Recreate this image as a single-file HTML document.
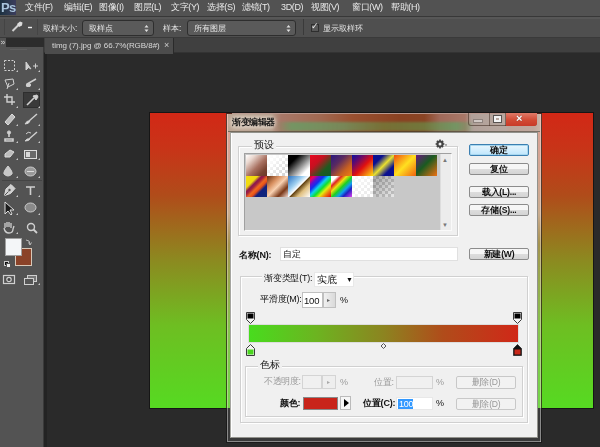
<!DOCTYPE html>
<html><head><meta charset="utf-8">
<style>
*{margin:0;padding:0;box-sizing:border-box}
html,body{width:600px;height:447px;overflow:hidden;background:#2a2a2a}
body{position:relative;font-family:"Liberation Sans",sans-serif;font-size:9px;color:#ddd}
.a{position:absolute}
.t{position:absolute;white-space:nowrap;line-height:1}
/* menubar */
#menu{left:0;top:0;width:600px;height:16px;background:#525252}
#menu .t{top:3px;color:#e8e8e8;font-size:9px;font-weight:500;letter-spacing:-0.35px}
#opt{left:0;top:17px;width:600px;height:20px;background:#4f4f4f}
.dd{position:absolute;height:16px;border:1px solid #2e2e2e;border-radius:3px;background:#5a5a5a}
#tabstrip{left:44px;top:38px;width:556px;height:15px;background:#404040;border-bottom:1px solid #333}
#tab{left:45px;top:38px;width:129px;height:16px;background:#4c4c4c;border-right:1px solid #2a2a2a}
#tools{left:0;top:38px;width:44px;height:409px;background:#535353}
#canvas{left:150px;top:113px;width:443px;height:295px;background:linear-gradient(180deg,#d22816 0%,#c83418 12%,#b04c1a 28%,#8c8a20 50%,#6ebe22 72%,#56da22 100%);box-shadow:0 0 0 1px #161616}
/* dialog */
#dlg{left:227px;top:113px;width:314px;height:330px}
#title{left:0;top:0;width:314px;height:20px;background:linear-gradient(90deg,#b49080 0%,#9a7a62 15%,#8a6a50 30%,#7a8a60 45%,#8a7a5a 60%,#7a8f60 75%,#a06a55 88%,#c05040 100%)}
#client{left:4px;top:19px;width:305px;height:305px;background:#f0f0f0}
.gb{position:absolute;border:1px solid #d0d0d0;box-shadow:1px 1px 0 #fff inset,1px 1px 0 #fff}
.btn{position:absolute;height:12px;border:1px solid #8c8c8c;border-radius:2px;background:linear-gradient(#f6f6f6 45%,#dcdcdc 55%,#d4d4d4);color:#111;font-size:8.6px;font-weight:bold;letter-spacing:-0.2px;text-align:center;line-height:10px}
.lbl{position:absolute;white-space:nowrap;line-height:1;color:#111;font-size:9px;font-weight:500;letter-spacing:-0.2px}
.dis{color:#9a9a9a}
.inp{position:absolute;background:#fff;border:1px solid #c8c8c8}
.sw{position:absolute;width:21px;height:21px}
</style></head><body>
<div id="root" style="position:absolute;left:0;top:0;width:600px;height:447px;filter:blur(0.45px)">

<div id="menu" class="a">
  <div class="a" style="left:0;top:0;width:16px;height:15px;background:linear-gradient(90deg,#1c3040,#2c3a50 50%,#3c3c5c)"></div>
  <div class="t" style="left:1px;top:1px;font-size:13px;color:#a8c4dc;font-weight:bold;letter-spacing:-0.6px;filter:blur(0.3px)">Ps</div>
  <div class="t" style="left:25px">文件(F)</div>
  <div class="t" style="left:64px">编辑(E)</div>
  <div class="t" style="left:99px">图像(I)</div>
  <div class="t" style="left:134px">图层(L)</div>
  <div class="t" style="left:171px">文字(Y)</div>
  <div class="t" style="left:207px">选择(S)</div>
  <div class="t" style="left:242px">滤镜(T)</div>
  <div class="t" style="left:281px">3D(D)</div>
  <div class="t" style="left:311px">视图(V)</div>
  <div class="t" style="left:352px">窗口(W)</div>
  <div class="t" style="left:391px">帮助(H)</div>
</div>
<div class="a" style="left:0;top:16px;width:600px;height:1px;background:#383838"></div>
<div id="opt" class="a">
  <div class="a" style="left:0;top:0;width:600px;height:2px;background:#575757"></div>
  <svg class="a" style="left:0;top:0" width="40" height="20" viewBox="0 17 40 20">
  <path d="M12.5 31 L19 24.5" stroke="#cfcfcf" stroke-width="2" fill="none"/>
  <path d="M17 24 L20 21.5 L22.5 22.5 L22 25.5 L19 27 Z" fill="#dcdcdc"/>
  <path d="M28 27.5 H32" stroke="#eee" stroke-width="1.4"/>
  <path d="M4.5 19 V35" stroke="#444"/>
  <path d="M37.5 19 V35" stroke="#454545"/>
</svg>
  <div class="t" style="left:43px;top:7px;color:#e4e4e4;font-size:8.3px">取样大小:</div>
  <div class="dd" style="left:82px;top:3px;width:72px"><div class="t" style="left:6px;top:3px;color:#e8e8e8;font-size:8.3px">取样点</div><svg class="a" style="right:4px;top:3px" width="5" height="9" viewBox="0 0 5 9"><path d="M0.5 3.5 L2.5 1 L4.5 3.5 Z M0.5 5.5 L2.5 8 L4.5 5.5 Z" fill="#e0e0e0"/></svg></div>
  <div class="t" style="left:163px;top:7px;color:#e4e4e4;font-size:8.3px">样本:</div>
  <div class="dd" style="left:187px;top:3px;width:109px"><div class="t" style="left:6px;top:3px;color:#e8e8e8;font-size:8.3px">所有图层</div><svg class="a" style="right:4px;top:3px" width="5" height="9" viewBox="0 0 5 9"><path d="M0.5 3.5 L2.5 1 L4.5 3.5 Z M0.5 5.5 L2.5 8 L4.5 5.5 Z" fill="#e0e0e0"/></svg></div>
  <div class="a" style="left:303px;top:2px;width:1px;height:16px;background:#3a3a3a"></div>
  <div class="a" style="left:311px;top:7px;width:8px;height:8px;border:1px solid #2e2e2e;background:#585858"></div>
  <div class="t" style="left:311px;top:5px;color:#eee;font-size:9px">&#10003;</div>
  <div class="t" style="left:323px;top:7px;color:#e4e4e4;font-size:8.3px">显示取样环</div>
</div>
<div class="a" style="left:0;top:37px;width:600px;height:1px;background:#3a3a3a"></div>
<div class="a" style="left:44px;top:53px;width:3px;height:394px;background:#232323"></div>

<div id="tabstrip" class="a"></div>
<div id="tab" class="a"><div class="t" style="left:7px;top:4px;color:#d8d8d8;font-size:8px;letter-spacing:-0.05px">timg (7).jpg @ 66.7%(RGB/8#)</div><div class="t" style="left:119px;top:3px;color:#ccc">&#215;</div></div>

<div id="tools" class="a">
  <div class="a" style="left:6px;top:0;width:38px;height:9px;background:#2c2c2c"></div>
  <div class="a" style="left:43px;top:9px;width:1px;height:400px;background:#3a3a3a"></div>
</div>
<svg class="a" style="left:0;top:0" width="44" height="447" viewBox="0 0 44 447">
 <g fill="none" stroke="#d0d0d0" stroke-width="1">
  <!-- header -->
  <path d="M1 41 L3 42.5 L1 44 M3 41 L5 42.5 L3 44" stroke="#bbb"/>
  <path d="M10 49.5 H27" stroke="#5e5e5e"/>
  <!-- marquee -->
  <rect x="4.5" y="60.5" width="10" height="10" stroke-dasharray="2 1.5"/>
  <!-- move -->
  <path d="M26 62 L26 70 L28.5 67.5 L31 69 Z" fill="#d0d0d0"/>
  <path d="M33 66 H38 M35.5 63.5 V68.5" />
  <!-- lasso -->
  <path d="M5 80 L13 79 L14 84 L8 87 Z"/>
  <path d="M9 83 L7 89"/>
  <!-- quick selection -->
  <path d="M28 86 Q26 87 27 84 L36 79" stroke-width="1.6"/>
  <circle cx="29" cy="85" r="1.6" fill="#d0d0d0"/>
  <!-- crop -->
  <path d="M7 94 V102 H15 M4 97 H12 V105" stroke-width="1.4"/>
  <!-- eyedropper selected box -->
  <rect x="23.5" y="92.5" width="16" height="15" fill="#3a3a3a" stroke="#2e2e2e"/>
  <path d="M27 105 L34 98" stroke-width="1.6"/>
  <path d="M33 96 L37 95 L38 97 L36 100 Z" fill="#d0d0d0"/>
  <!-- healing -->
  <path d="M5 122 L12 114 L15 117 L8 125 Z" fill="#bdbdbd" stroke="#ddd"/>
  <!-- brush -->
  <path d="M37 114 L29 121" stroke-width="1.4"/>
  <path d="M25 124 Q27 120 30 121 Q29 124 25 124 Z" fill="#e0e0e0"/>
  <!-- clone stamp -->
  <path d="M9 132 V137 M5 139 H13 V141 H5 Z" stroke-width="1.6"/>
  <circle cx="9" cy="132.5" r="1.6" fill="#d0d0d0"/>
  <!-- history brush -->
  <path d="M37 132 L29 139" stroke-width="1.4"/>
  <path d="M25 141 Q27 138 30 139 Q29 141 25 141 Z" fill="#e0e0e0"/>
  <path d="M26 134 Q28 131 31 133" />
  <!-- eraser -->
  <path d="M5 154 L10 150 L14 152 L10 157 L5 157 Z" fill="#bdbdbd" stroke="#ddd"/>
  <!-- gradient -->
  <rect x="24.5" y="150.5" width="12" height="8" fill="#6a6a6a" stroke="#ddd"/>
  <rect x="26" y="152" width="4" height="5" fill="#d8d8d8" stroke="none"/>
  <!-- blur drop -->
  <path d="M8 166 Q13 172 12 174 Q8 178 4 174 Q3 172 8 166 Z" fill="#c8c8c8"/>
  <!-- dodge -->
  <ellipse cx="30.5" cy="171.5" rx="5.5" ry="4.5" fill="#9a9a9a" stroke="#ccc"/>
  <path d="M27 171.5 H34" stroke="#ddd"/>
  <path d="M2 180.5 H42" stroke="#444"/>
  <!-- pen -->
  <path d="M4.5 195.5 L6 189 L11 184.5 L15 188.5 L10.5 193.5 Z" fill="#cfcfcf" stroke="#ddd"/><circle cx="9.5" cy="190" r="1.2" fill="#555" stroke="none"/><path d="M4.5 195.5 L8.5 191.5" stroke="#555"/>
  <!-- type -->
  <path d="M26 187 H35 M30.5 187 V195" stroke-width="1.6"/>
  <!-- path selection -->
  <path d="M5 202 V214 L8 211 L11 215 L12 214 L10 210 L14 210 Z" fill="#1c1c1c" stroke="#ddd"/>
  <!-- shape -->
  <ellipse cx="30.5" cy="207.5" rx="5.5" ry="4.5" fill="#8a8a8a" stroke="#ccc"/>
  <!-- hand -->
  <path d="M5 228 L5 223 M7 227 L7 222 M9 227 L9 222 M11 228 L11 223 M4 228 Q5 233 9 233 Q13 233 13 229 L14 226" stroke-width="1.3"/>
  <!-- zoom -->
  <circle cx="31" cy="227" r="3.5" stroke-width="1.4"/>
  <path d="M33.5 229.5 L37 233" stroke-width="1.8"/>
  <!-- swap & default -->
  <path d="M26 240 Q30 240 30 244 M28.5 242.5 L30 245 L31.5 242.5" stroke="#bbb"/>
  <rect x="4.5" y="261.5" width="4" height="4" fill="#111" stroke="#ccc"/>
  <rect x="6.5" y="263.5" width="4" height="4" fill="#eee" stroke="#555"/>
  <!-- quick mask -->
  <rect x="3.5" y="275.5" width="11" height="8" stroke-width="1.2"/>
  <circle cx="9" cy="279.5" r="2.2" fill="#444" stroke-width="1.2"/>
  <!-- screen mode -->
  <rect x="27.5" y="275.5" width="9" height="6" fill="#777"/>
  <rect x="24.5" y="278.5" width="9" height="6" fill="#555"/>
 </g>
 <g fill="#c8c8c8">
  <path d="M16 72 L18 72 L18 70 Z M38 72 L40 72 L40 70 Z M16 90 L18 90 L18 88 Z M38 90 L40 90 L40 88 Z M16 108 L18 108 L18 106 Z M38 108 L40 108 L40 106 Z M16 126 L18 126 L18 124 Z M38 126 L40 126 L40 124 Z M16 143 L18 143 L18 141 Z M38 143 L40 143 L40 141 Z M16 160 L18 160 L18 158 Z M38 160 L40 160 L40 158 Z M16 178 L18 178 L18 176 Z M38 178 L40 178 L40 176 Z M16 197 L18 197 L18 195 Z M38 197 L40 197 L40 195 Z M16 215 L18 215 L18 213 Z M38 215 L40 215 L40 213 Z M16 234 L18 234 L18 232 Z M38 285 L40 285 L40 283 Z"/>
 </g>
 <rect x="15.5" y="248.5" width="16" height="17" fill="#8a4228" stroke="#d8c8b8"/>
 <rect x="5.5" y="238.5" width="16" height="17" fill="#f4f6f8" stroke="#a0a0a0"/>
</svg>

<div id="canvas" class="a"></div>


<div id="dlg">
  
<div class="a" style="left:226px;top:113px;width:316px;height:330px;border:1px solid rgba(30,15,10,.7);background:linear-gradient(180deg,rgba(220,215,205,.7) 0px,rgba(220,215,205,.65) 100px,rgba(200,205,190,.3) 130px,rgba(190,200,180,.25) 100%);box-shadow:inset 0 0 0 1px rgba(255,235,225,.4)"></div>
  <div class="a" style="left:226px;top:408px;width:316px;height:35px;border:1px solid #1a1a1a;border-top:none;background:#3a3a3a;box-shadow:inset 1px -1px 0 rgba(190,190,190,.6),inset -1px 0 0 rgba(190,190,190,.6)"></div>
  <div id="title" class="a" style="left:228px;top:114px;width:312px;height:18px;background:linear-gradient(90deg,#bca694 0%,#b49c8a 14%,#a87868 17%,#a06850 30%,#9a5030 40%,#8a4222 55%,#8a4424 63%,#a06a5a 68%,#a87868 76%,#b0a098 78%,#b8a8a0 89%,#bca49a 90%,#c0a89e 98%,#c8b4a8 100%)"></div>
  <div class="a" style="left:232px;top:113px;width:305px;height:1px;background:rgba(255,230,220,.6)"></div>
  <div class="a" style="left:276px;top:122px;width:196px;height:9px;background:linear-gradient(90deg,rgba(100,160,100,0),rgba(100,160,100,.75) 8%,rgba(105,155,100,.7) 35%,rgba(110,130,60,.7) 55%,rgba(105,140,70,.7) 75%,rgba(100,160,100,.75) 92%,rgba(100,160,100,.2));filter:blur(0.8px)"></div>
  <div class="a" style="left:228px;top:131px;width:312px;height:1px;background:rgba(50,50,40,.5)"></div>
  <div class="a" style="left:230px;top:116px;width:46px;height:13px;border-radius:6px;background:rgba(235,225,215,.55);filter:blur(1.5px)"></div>
  <div class="t" style="left:232px;top:118px;color:#151515;font-size:8.5px;font-weight:bold;letter-spacing:-0.4px">渐变编辑器</div>
  <!-- title buttons -->
  <div class="a" style="left:468px;top:113px;width:69px;height:13px;border:1px solid rgba(60,40,30,.55);border-top:none;border-radius:0 0 3px 3px"></div>
  <div class="a" style="left:489px;top:113px;width:1px;height:13px;background:rgba(60,40,30,.5)"></div>
  <div class="a" style="left:505px;top:113px;width:1px;height:13px;background:rgba(60,40,30,.5)"></div>
  <div class="a" style="left:474px;top:120px;width:8px;height:2px;background:rgba(240,240,240,.5);box-shadow:0 0 0 1px rgba(60,60,60,.3)"></div>
  <div class="a" style="left:494px;top:116px;width:7px;height:6px;border:2px solid #f4f4f4;box-shadow:0 0 0 1px rgba(50,50,50,.7)"></div>
  <div class="a" style="left:506px;top:113px;width:31px;height:13px;border-radius:0 0 3px 0;background:linear-gradient(#e07a68,#d24a34 55%,#c83a28)"></div>
  <div class="t" style="left:516px;top:113px;color:#fff;font-size:11px;font-weight:bold;text-shadow:0 0 1px #533">&#215;</div>
  <div id="client" class="a" style="left:230px;top:132px;width:308px;height:306px;background:#f0f0f0;border:1px solid rgba(70,70,60,.55);border-left-color:rgba(90,90,80,.5)"></div>
  <div class="a" style="left:231px;top:133px;width:1px;height:304px;background:#fff"></div>

  <!-- presets -->
  <div class="gb" style="left:238px;top:146px;width:220px;height:90px"></div>
  <div class="lbl" style="left:252px;top:140px;background:#f0f0f0;padding:0 2px;font-size:9.5px;font-weight:normal;color:#1a1a1a">预设</div>
  <svg class="a" style="left:434px;top:139px" width="14" height="11" viewBox="0 0 14 11">
    <circle cx="6" cy="5" r="3.6" fill="#444"/>
    <path d="M6 0.6 V9.4 M1.6 5 H10.4 M2.9 1.9 L9.1 8.1 M9.1 1.9 L2.9 8.1" stroke="#444" stroke-width="1.6"/>
    <circle cx="6" cy="5" r="1.5" fill="#f0f0f0"/>
    <path d="M11 5.5 L13 5.5 L12 7 Z" fill="#444"/>
  </svg>
  <div class="a" style="left:244px;top:153px;width:208px;height:78px;background:#c8c8c8;border:1px solid #fafafa;border-top-color:#a0a0a0;border-left-color:#a0a0a0"></div>
  <div class="a" style="left:440px;top:154px;width:11px;height:76px;background:#ececec;border-left:1px solid #ddd"></div>
  <div class="t" style="left:442px;top:157px;color:#777;font-size:6px">&#9650;</div>
  <div class="t" style="left:442px;top:222px;color:#777;font-size:6px">&#9660;</div>
  <div class="sw" style="left:246.0px;top:155px;width:21.2px;background:linear-gradient(135deg,#fff 0%,#ead8d0 22%,#a87060 55%,#7a4432 80%,#6a3828 100%)"></div>
  <div class="sw" style="left:267.2px;top:155px;width:21.2px;background:linear-gradient(135deg,#fff 0%,rgba(255,255,255,.85) 30%,rgba(255,255,255,0) 100%),repeating-conic-gradient(#cfcfcf 0 25%,#fff 0 50%) 0 0/6px 6px"></div>
  <div class="sw" style="left:288.4px;top:155px;width:21.2px;background:linear-gradient(135deg,#000 0%,#000 25%,#fff 80%,#fff 100%)"></div>
  <div class="sw" style="left:309.6px;top:155px;width:21.2px;background:linear-gradient(135deg,#e80820 0%,#c81020 35%,#205a20 70%,#105a28 100%)"></div>
  <div class="sw" style="left:330.8px;top:155px;width:21.2px;background:linear-gradient(135deg,#281880 0%,#5a2a60 35%,#c86020 70%,#f08010 100%)"></div>
  <div class="sw" style="left:352.0px;top:155px;width:21.2px;background:linear-gradient(135deg,#0a10a0 0%,#600a70 25%,#e01010 55%,#ffe010 100%)"></div>
  <div class="sw" style="left:373.2px;top:155px;width:21.2px;background:linear-gradient(135deg,#0a1090 0%,#0a1090 25%,#e8e030 50%,#0a1090 75%,#0a1090 100%)"></div>
  <div class="sw" style="left:394.4px;top:155px;width:21.2px;background:linear-gradient(135deg,#f05010 0%,#ffe020 50%,#f06010 100%)"></div>
  <div class="sw" style="left:415.6px;top:155px;width:21.2px;background:linear-gradient(135deg,#6a1a80 0%,#1a5a20 45%,#f07010 100%)"></div>
  <div class="sw" style="left:246.0px;top:176px;width:21.2px;background:linear-gradient(135deg,#f4e010 0%,#f0d810 28%,#8a1a50 38%,#a02040 44%,#f06820 54%,#e85018 62%,#102080 72%,#102878 100%)"></div>
  <div class="sw" style="left:267.2px;top:176px;width:21.2px;background:linear-gradient(135deg,#6a3010 0%,#d89060 30%,#f8d0b0 50%,#7a3818 75%,#f0d8d0 100%)"></div>
  <div class="sw" style="left:288.4px;top:176px;width:21.2px;background:linear-gradient(135deg,#2a70c0 0%,#a0d0f0 35%,#ffffff 50%,#604010 53%,#e0c080 70%,#ffffff 100%)"></div>
  <div class="sw" style="left:309.6px;top:176px;width:21.2px;background:linear-gradient(135deg,#e00010 0%,#f00060 10%,#6010d0 22%,#1030f0 34%,#10d0f0 46%,#10e030 58%,#e0f010 70%,#f08010 82%,#e00010 100%)"></div>
  <div class="sw" style="left:330.8px;top:176px;width:21.2px;background:linear-gradient(135deg,#fff 0%,#fff 15%,#e02020 25%,#f0e010 38%,#20d020 52%,#10a0f0 66%,#2020c0 78%,#e040f0 100%)"></div>
  <div class="sw" style="left:352.0px;top:176px;width:21.2px;background:linear-gradient(135deg,rgba(255,255,255,.9),rgba(255,255,255,.5)),repeating-conic-gradient(#cfcfcf 0 25%,#fff 0 50%) 0 0/6px 6px"></div>
  <div class="sw" style="left:373.2px;top:176px;width:21.2px;background:linear-gradient(135deg,rgba(80,80,80,.5),rgba(140,140,140,.2)),repeating-conic-gradient(#cfcfcf 0 25%,#fff 0 50%) 0 0/6px 6px"></div>

  <!-- buttons -->
  <div class="btn" style="left:469px;top:144px;width:60px;border-color:#3c7fb1;background:linear-gradient(#eaf6fd,#bee6fd);box-shadow:inset 0 0 0 1px #a8d8f0">确定</div>
  <div class="btn" style="left:469px;top:163px;width:60px">复位</div>
  <div class="btn" style="left:469px;top:186px;width:60px">载入(L)...</div>
  <div class="btn" style="left:469px;top:204px;width:60px">存储(S)...</div>
  <div class="btn" style="left:469px;top:248px;width:60px">新建(W)</div>

  <!-- name -->
  <div class="lbl" style="font-weight:bold;left:239px;top:251px">名称(N):</div>
  <div class="inp" style="left:280px;top:247px;width:178px;height:14px;border-color:#e0e0e0"></div>
  <div class="lbl" style="left:283px;top:250px;font-size:9px;font-weight:normal">自定</div>

  <!-- gradient group -->
  <div class="gb" style="left:240px;top:276px;width:288px;height:147px"></div>
  <div class="lbl" style="left:262px;top:274px;background:#f0f0f0;padding:0 2px">渐变类型(T):</div>
  <div class="inp" style="left:314px;top:272px;width:40px;height:15px;border-color:#e8e8e8"></div>
  <div class="lbl" style="left:317px;top:275px;font-size:9.5px;font-weight:normal">实底</div>
  <div class="t" style="left:346px;top:276px;color:#111;font-size:7px">&#9660;</div>

  <div class="lbl" style="left:260px;top:295px">平滑度(M):</div>
  <div class="inp" style="left:302px;top:292px;width:21px;height:16px;border-color:#c0c0c0"></div>
  <div class="lbl" style="left:304px;top:296px;font-size:9.5px;font-weight:normal">100</div>
  <div class="a" style="left:323px;top:292px;width:13px;height:16px;border:1px solid #c0c0c0;background:linear-gradient(90deg,#f0f0f0,#dadada)"></div>
  <div class="t" style="left:327px;top:297px;color:#666;font-size:6px">&#9656;</div>
  <div class="lbl" style="left:340px;top:296px">%</div>

  <!-- stops -->
  <svg class="a" style="left:0;top:0" width="600" height="447" viewBox="0 0 600 447">
    <g stroke="#3a3a3a" stroke-width="1">
      <path d="M246.5 312.5 H254.5 V319.5 L250.5 323.5 L246.5 319.5 Z" fill="#f4f4f4"/>
      <rect x="247.5" y="313.5" width="6" height="5" fill="#000" stroke="none"/>
      <path d="M513.5 312.5 H521.5 V319.5 L517.5 323.5 L513.5 319.5 Z" fill="#f4f4f4"/>
      <rect x="514.5" y="313.5" width="6" height="5" fill="#000" stroke="none"/>
      <path d="M246.5 355.5 H254.5 V348.5 L250.5 344.5 L246.5 348.5 Z" fill="#f4f4f4"/>
      <rect x="247.5" y="349.5" width="6" height="5" fill="#4ad61e" stroke="none"/>
      <path d="M513.5 355.5 H521.5 V348.5 L517.5 344.5 L513.5 348.5 Z" fill="#111"/>
      <rect x="514.5" y="349.5" width="6" height="5" fill="#c8281a" stroke="none"/>
      <path d="M383.5 343.5 L386 346 L383.5 348.5 L381 346 Z" fill="#f0f0f0" stroke="#555"/>
    </g>
  </svg>
  <div class="a" style="left:249px;top:325px;width:269px;height:17px;background:linear-gradient(90deg,#48dc1e 0%,#6cb420 25%,#8c8420 50%,#b04c1a 72%,#d02818 100%);box-shadow:0 0 0 1px #ddd"></div>

  <!-- color stop group -->
  <div class="gb" style="left:245px;top:366px;width:278px;height:51px"></div>
  <div class="lbl" style="left:258px;top:360px;background:#f0f0f0;padding:0 2px;font-size:9.5px;font-weight:normal">色标</div>

  <div class="lbl dis" style="left:264px;top:377px;font-weight:normal;letter-spacing:-0.4px">不透明度:</div>
  <div class="inp" style="left:302px;top:375px;width:20px;height:14px;background:#f0f0f0;border-color:#d4d4d4"></div>
  <div class="a" style="left:322px;top:375px;width:14px;height:14px;border:1px solid #d4d4d4;background:#eee"></div>
  <div class="t" style="left:327px;top:379px;color:#aaa;font-size:6px">&#9656;</div>
  <div class="lbl dis" style="left:340px;top:378px">%</div>
  <div class="lbl dis" style="left:374px;top:378px">位置:</div>
  <div class="inp" style="left:396px;top:376px;width:37px;height:13px;background:#f0f0f0;border-color:#d4d4d4"></div>
  <div class="lbl dis" style="left:436px;top:378px">%</div>
  <div class="btn" style="left:456px;top:376px;width:60px;height:13px;color:#9a9a9a;border-color:#c8c8c8;background:#f2f2f2;font-weight:normal">删除(D)</div>

  <div class="lbl" style="font-weight:bold;left:280px;top:399px">颜色:</div>
  <div class="a" style="left:303px;top:397px;width:35px;height:13px;background:#c8241a;border:1px solid #888"></div>
  <div class="a" style="left:340px;top:396px;width:11px;height:14px;border:1px solid #bbb;background:#f6f6f6"></div>
  <div class="a" style="left:344px;top:399px;width:0;height:0;border-top:4px solid transparent;border-bottom:4px solid transparent;border-left:5px solid #000"></div>
  <div class="lbl" style="font-weight:bold;left:363px;top:399px">位置(C):</div>
  <div class="inp" style="left:396px;top:397px;width:37px;height:13px;border-color:#e8e8e8"></div>
  <div class="a" style="left:398px;top:399px;width:15px;height:10px;background:#3399ff"></div>
  <div class="lbl" style="left:399px;top:400px;color:#fff">100</div>
  <div class="lbl" style="left:436px;top:399px">%</div>
  <div class="btn" style="left:456px;top:398px;width:60px;height:12px;color:#9a9a9a;border-color:#c8c8c8;background:#f2f2f2;font-weight:normal">删除(D)</div>
</div>

</div>
</body></html>
